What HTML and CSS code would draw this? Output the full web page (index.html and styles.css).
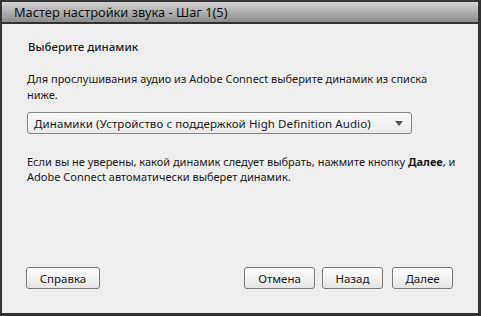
FILE: index.html
```html
<!DOCTYPE html>
<html lang="ru">
<head>
<meta charset="utf-8">
<link rel="stylesheet" href="styles.css">
</head>
<body>
<div class="dialog">
  <div class="titlebar">Мастер настройки звука - Шаг 1(5)</div>
  <div class="content">
    <div class="heading">Выберите динамик</div>
    <p class="text first">Для прослушивания аудио из Adobe Connect выберите динамик из списка ниже.</p>
    <div class="select">
      <span class="value">Динамики (Устройство с поддержкой High Definition Audio)</span>
      <svg class="arrow" width="8" height="5" viewBox="0 0 8 5"><path d="M0 0H8L4 5Z" fill="#555"/></svg>
    </div>
    <p class="text second"><span>Если вы не уверены, какой динамик следует выбрать, нажмите кнопку <b>Далее</b>, и</span> <span>Adobe Connect автоматически выберет динамик.</span></p>
  </div>
  <div class="footer">
    <button class="btn help">Справка</button>
    <div class="right">
      <button class="btn cancel">Отмена</button>
      <button class="btn back">Назад</button>
      <button class="btn next">Далее</button>
    </div>
  </div>
</div>
</body>
</html>
```
FILE: styles.css
```css
html, body {
  margin: 0;
  padding: 0;
  width: 481px;
  height: 316px;
  overflow: hidden;
  background: #2e2e2e;
}
.dialog {
  box-sizing: border-box;
  width: 481px;
  height: 316px;
  border-style: solid;
  border-color: #333;
  border-width: 2px 3px 3px 2px;
  background: #eeeeee;
  display: flex;
  flex-direction: column;
  font-family: "Noto Sans", "Open Sans", sans-serif;
  color: #1a1a1a;
}
.titlebar {
  height: 20px;
  border-bottom: 2px solid #333;
  background: linear-gradient(#d2d2d2, #8c8c8c);
  padding-left: 12px;
  font-size: 12.8px;
  line-height: 21px;
  color: #111;
}
.content {
  flex: 1;
  padding: 16px 0 0 25px;
}
.heading {
  font-size: 11.5px;
  font-weight: 500;
  line-height: 14px;
  margin-left: 1px;
}
.text {
  margin: 0;
  font-size: 11px;
  line-height: 15.5px;
  width: 410px;
}
.first {
  margin-top: 17px;
}
.select {
  box-sizing: border-box;
  margin-top: 10px;
  width: 385px;
  height: 22px;
  border: 1px solid #888;
  border-radius: 3px;
  background: linear-gradient(#fbfbfb, #e9e9e9);
  display: flex;
  align-items: center;
  justify-content: space-between;
  padding: 0 8px 0 6px;
  font-size: 11.5px;
  white-space: nowrap;
}
.value {
  letter-spacing: 0.1px;
}
.second {
  margin-top: 20px;
  width: 440px;
  line-height: 15px;
}
.second b {
  font-weight: 700;
}
.footer {
  display: flex;
  justify-content: space-between;
  padding: 0 25px 24px 24px;
}
.right {
  display: flex;
  gap: 7px;
}
.btn {
  box-sizing: border-box;
  height: 22px;
  border: 1px solid #7a7a7a;
  border-radius: 3px;
  background: linear-gradient(#fdfdfd, #e6e6e6);
  font-family: "Noto Sans", "Open Sans", sans-serif;
  font-size: 11.5px;
  color: #1a1a1a;
  padding: 0;
}
.help { width: 74px; }
.cancel { width: 71px; }
.back { width: 61px; margin-right: 2px; }
.next { width: 61px; }
```
